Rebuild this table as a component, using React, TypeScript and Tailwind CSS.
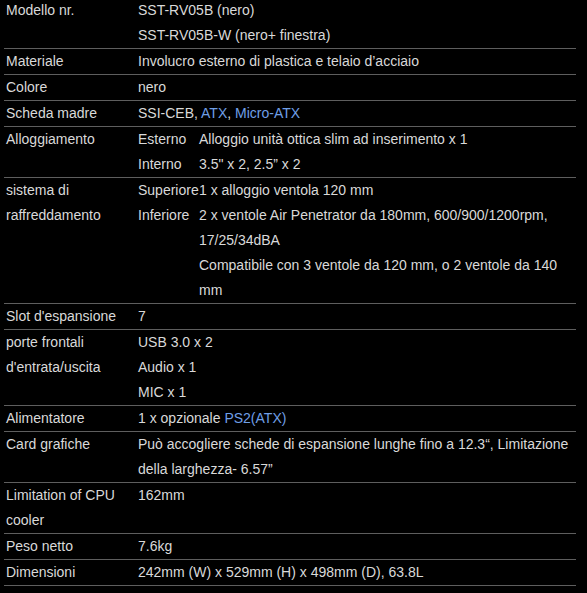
import React from "react";

type Sub = { k: string; v: React.ReactNode[] };
type Row = { label: string; value?: React.ReactNode[]; subs?: Sub[] };

const Link = ({ children }: { children: React.ReactNode }) => (
  <span className="text-[#6f9fe6]">{children}</span>
);

const rows: Row[] = [
  { label: "Modello nr.", value: ["SST-RV05B (nero)", "SST-RV05B-W (nero+ finestra)"] },
  { label: "Materiale", value: ["Involucro esterno di plastica e telaio d’acciaio"] },
  { label: "Colore", value: ["nero"] },
  {
    label: "Scheda madre",
    value: [
      <>
        SSI-CEB, <Link>ATX</Link>, <Link>Micro-ATX</Link>
      </>,
    ],
  },
  {
    label: "Alloggiamento",
    subs: [
      { k: "Esterno", v: ["Alloggio unità ottica slim ad inserimento x 1"] },
      { k: "Interno", v: ["3.5\" x 2, 2.5” x 2"] },
    ],
  },
  {
    label: "sistema di raffreddamento",
    subs: [
      { k: "Superiore", v: ["1 x alloggio ventola 120 mm"] },
      {
        k: "Inferiore",
        v: [
          "2 x ventole Air Penetrator da 180mm, 600/900/1200rpm, 17/25/34dBA",
          "Compatibile con 3 ventole da 120 mm, o 2 ventole da 140 mm",
        ],
      },
    ],
  },
  { label: "Slot d'espansione", value: ["7"] },
  { label: "porte frontali d'entrata/uscita", value: ["USB 3.0 x 2", "Audio x 1", "MIC x 1"] },
  {
    label: "Alimentatore",
    value: [
      <>
        1 x opzionale <Link>PS2(ATX)</Link>
      </>,
    ],
  },
  {
    label: "Card grafiche",
    value: ["Può accogliere schede di espansione lunghe fino a 12.3“, Limitazione della larghezza- 6.57”"],
  },
  { label: "Limitation of CPU cooler", value: ["162mm"] },
  { label: "Peso netto", value: ["7.6kg"] },
  { label: "Dimensioni", value: ["242mm (W) x 529mm (H) x 498mm (D), 63.8L"] },
];

export default function App() {
  return (
    <div className="min-h-screen overflow-hidden bg-black font-['Liberation_Sans',Arial,sans-serif] text-[14px] leading-[25px] text-[#d9d9d9]">
      <div className="mx-[4px] mt-[-2px] w-[572px]">
        {rows.map((row) => (
          <div key={row.label} className="grid grid-cols-[134px_1fr] border-b border-[#5e5e5e]">
            <div className="pl-[2px] pr-[4px]">{row.label}</div>
            <div>
              {row.value?.map((v, i) => <div key={i}>{v}</div>)}
              {row.subs?.map((s) => (
                <div key={s.k} className="grid grid-cols-[61px_1fr]">
                  <div>{s.k}</div>
                  <div>
                    {s.v.map((v, i) => (
                      <div key={i}>{v}</div>
                    ))}
                  </div>
                </div>
              ))}
            </div>
          </div>
        ))}
      </div>
    </div>
  );
}
